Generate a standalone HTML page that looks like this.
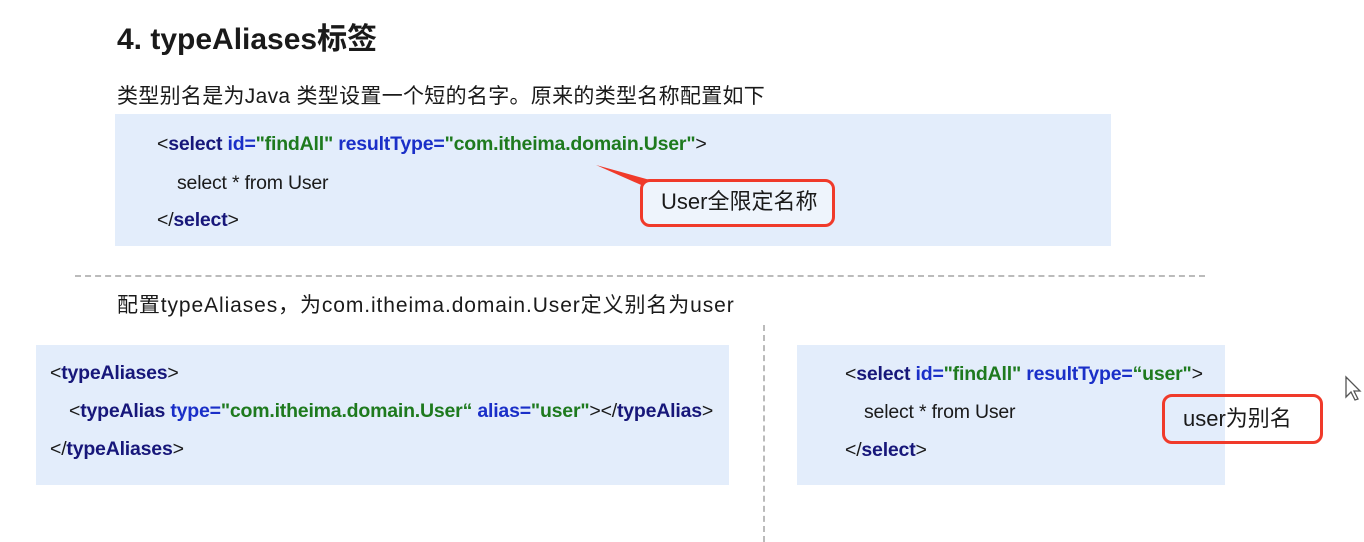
<!DOCTYPE html>
<html><head><meta charset="utf-8"><style>
body{margin:0;width:1364px;height:542px;background:#fff;position:relative;overflow:hidden;font-family:"Liberation Sans","Noto Sans CJK SC",sans-serif;color:#1a1a1a}
.a{position:absolute;white-space:nowrap}
.box{position:absolute;background:#e3edfb}
.code{font-size:19.5px;letter-spacing:-0.2px}
.t{color:#17177a;font-weight:bold}
.k{color:#1a2fc8;font-weight:bold}
.v{color:#1e7a1e;font-weight:bold}
.call{position:absolute;border:3px solid #f03a2a;border-radius:10px;background:#eef4fc;font-size:22px;box-sizing:border-box;padding-left:18px;line-height:40px}
</style></head><body>
<div class="a" style="left:117px;top:14px;font-size:30px;font-weight:bold">4. typeAliases标签</div>
<div class="a" style="left:117px;top:80px;font-size:21px;letter-spacing:0.3px">类型别名是为Java 类型设置一个短的名字。原来的类型名称配置如下</div>
<div class="box" style="left:115px;top:114px;width:996px;height:132px"></div>
<div class="a code" style="left:157px;top:133px"><span>&lt;</span><span class="t">select</span> <span class="k">id=</span><span class="v">"findAll"</span> <span class="k">resultType=</span><span class="v">"com.itheima.domain.User"</span>&gt;</div>
<div class="a code" style="left:177px;top:172px">select * from User</div>
<div class="a code" style="left:157px;top:209px">&lt;/<span class="t">select</span>&gt;</div>
<svg class="a" style="left:0;top:0" width="1364" height="542"><path d="M596 165 L650 180 L648 188 Z" fill="#f03a2a"/><path d="M1126 380 L1175 395 L1172 401 Z" fill="#f03a2a"/></svg>
<div class="call" style="left:640px;top:179px;width:195px;height:48px">User全限定名称</div>
<div class="a" style="left:75px;top:275px;width:1130px;border-top:2px dashed #bbb"></div>
<div class="a" style="left:117px;top:289px;font-size:21px;letter-spacing:0.9px">配置typeAliases，为com.itheima.domain.User定义别名为user</div>
<div class="a" style="left:763px;top:325px;height:217px;border-left:2px dashed #bbb"></div>
<div class="box" style="left:36px;top:345px;width:693px;height:140px"></div>
<div class="a code" style="left:50px;top:362px">&lt;<span class="t">typeAliases</span>&gt;</div>
<div class="a code" style="left:69px;top:400px">&lt;<span class="t">typeAlias</span> <span class="k">type=</span><span class="v">"com.itheima.domain.User“</span> <span class="k">alias=</span><span class="v">"user"</span>&gt;&lt;/<span class="t">typeAlias</span>&gt;</div>
<div class="a code" style="left:50px;top:438px">&lt;/<span class="t">typeAliases</span>&gt;</div>
<div class="box" style="left:797px;top:345px;width:428px;height:140px"></div>
<div class="a code" style="left:845px;top:363px">&lt;<span class="t">select</span> <span class="k">id=</span><span class="v">"findAll"</span> <span class="k">resultType=</span><span class="v">“user"</span>&gt;</div>
<div class="a code" style="left:864px;top:401px">select * from User</div>
<div class="a code" style="left:845px;top:439px">&lt;/<span class="t">select</span>&gt;</div>
<div class="call" style="left:1162px;top:394px;width:161px;height:50px;background:transparent;line-height:44px">user为别名</div>
<svg class="a" style="left:1344px;top:375px" width="20" height="28"><path d="M2 2 L2 22 L7 17 L11 25 L14 24 L10 16 L16 16 Z" fill="#fff" stroke="#555" stroke-width="1.3"/></svg>
</body></html>
